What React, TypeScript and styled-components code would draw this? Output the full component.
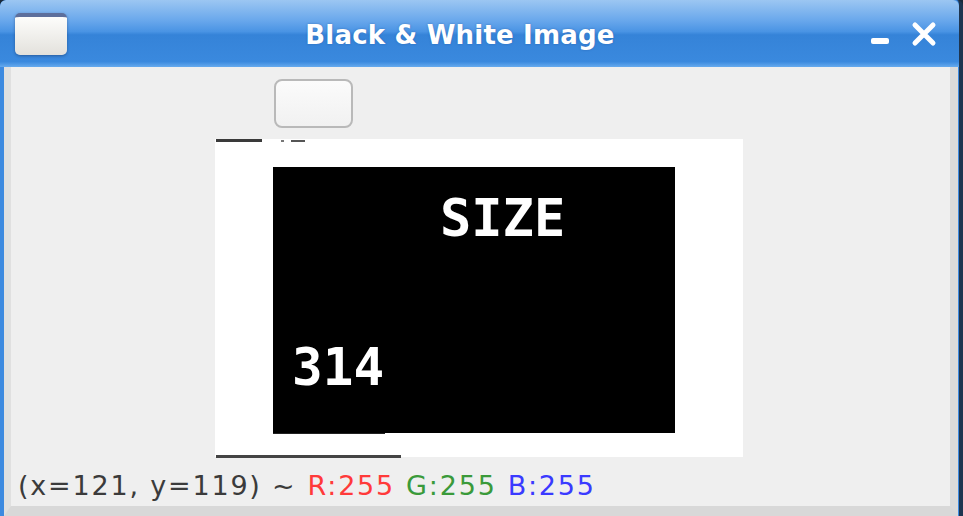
import React from "react";
import styled, { createGlobalStyle } from "styled-components";

const GlobalStyle = createGlobalStyle`
  html, body {
    margin: 0;
    padding: 0;
    background: #1b2a3a;
  }
  body {
    font-family: "DejaVu Sans", "Noto Sans", sans-serif;
  }
`;

const Frame = styled.div`
  width: 963px;
  height: 516px;
  display: flex;
  flex-direction: column;
  box-sizing: border-box;
  background: #3d8ae0;
  border-right: 4px solid #1e3550;
  border-radius: 6px 6px 0 0;
  overflow: hidden;
`;

const TitleBar = styled.div`
  height: 67px;
  flex: none;
  display: grid;
  grid-template-columns: 80px 1fr 112px;
  align-items: center;
  padding: 0 22px 0 15px;
  background: linear-gradient(
    #9cc6f2 0%,
    #6aa8ec 30%,
    #4a94e4 47%,
    #3583d8 52%,
    #3a89de 92%,
    #66aaee 100%
  );
  border-radius: 6px 6px 0 0;
`;

const WindowIcon = styled.div`
  width: 52px;
  height: 42px;
  box-sizing: border-box;
  border-radius: 5px;
  border-top: 4px solid #5d6f9c;
  background: linear-gradient(#fdfdfb, #e3e1dc);
  box-shadow: 0 1px 3px rgba(20, 40, 80, 0.45);
`;

const Title = styled.div`
  text-align: center;
  color: #ffffff;
  font-size: 26px;
  font-weight: bold;
  letter-spacing: 0.2px;
  padding-top: 2px;
  text-shadow: 0 0 2px rgba(30, 70, 140, 0.5);
`;

const Controls = styled.div`
  display: flex;
  align-items: center;
  justify-content: flex-end;
  gap: 21px;
`;

const Minimize = styled.svg`
  margin-top: 14px;
`;

const Body = styled.div`
  flex: 1;
  display: flex;
  flex-direction: column;
  margin-left: 4px;
  margin-right: 1px;
  background: #efefef;
  border-left: 7px solid #e0e0e0;
  border-right: 8px solid #dadada;
  border-bottom: 10px solid #d8d8d8;
`;

const Toolbar = styled.div`
  display: flex;
  padding: 12px 0 0 263px;
`;

const ToolButton = styled.button`
  width: 79px;
  height: 49px;
  border: 2px solid #b9b9b9;
  border-radius: 8px;
  background: linear-gradient(#fbfbfb, #f1f1f1);
  padding: 0;
`;

const CanvasRow = styled.div`
  display: flex;
  padding: 11px 0 0 204px;
`;

const StatusBar = styled.div`
  display: flex;
  gap: 11px;
  padding: 10px 0 0 7px;
  font-size: 27px;
  letter-spacing: 1.8px;
  line-height: 34px;
  color: #3b3b3b;
`;

const Channel = styled.span<{ $color: string }>`
  color: ${(p) => p.$color};
`;

const BWImage = () => (
  <svg width="528" height="320" viewBox="0 0 528 320">
    <rect x="0" y="0" width="528" height="318" fill="#ffffff" />
    <rect x="1" y="0" width="46" height="3" fill="#3a3a3a" />
    <rect x="66" y="1" width="3" height="2" fill="#777" />
    <rect x="76" y="1" width="14" height="2" fill="#555" />
    <rect x="58" y="28" width="402" height="266" fill="#000000" />
    <rect x="58" y="294" width="112" height="1" fill="#222" />
    <rect x="1" y="316" width="185" height="3" fill="#444" />
    <text
      x="225"
      y="97"
      fill="#fff"
      fontFamily="'DejaVu Sans Mono', monospace"
      fontWeight="bold"
      fontSize="52"
    >
      SIZE
    </text>
    <text
      x="77"
      y="246"
      fill="#fff"
      fontFamily="'DejaVu Sans Mono', monospace"
      fontWeight="bold"
      fontSize="51"
    >
      314
    </text>
  </svg>
);

export default function App() {
  return (
    <>
      <GlobalStyle />
      <Frame>
        <TitleBar>
          <WindowIcon />
          <Title>Black &amp; White Image</Title>
          <Controls>
            <Minimize width="20" height="8" viewBox="0 0 20 8">
              <rect x="1" y="1" width="18" height="6" rx="2" fill="#fff" />
            </Minimize>
            <svg width="26" height="26" viewBox="0 0 26 26">
              <path
                d="M4 4 L22 22 M22 4 L4 22"
                stroke="#fff"
                strokeWidth="5"
                strokeLinecap="round"
              />
            </svg>
          </Controls>
        </TitleBar>
        <Body>
          <Toolbar>
            <ToolButton aria-label="tool" />
          </Toolbar>
          <CanvasRow>
            <BWImage />
          </CanvasRow>
          <StatusBar>
            <span>(x=121, y=119) ~</span>
            <Channel $color="#ff3a3a">R:255</Channel>
            <Channel $color="#3a9a3a">G:255</Channel>
            <Channel $color="#3a3aff">B:255</Channel>
          </StatusBar>
        </Body>
      </Frame>
    </>
  );
}
